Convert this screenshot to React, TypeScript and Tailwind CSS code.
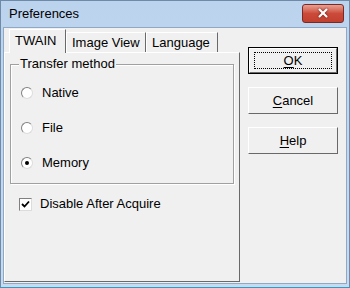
import { X } from 'lucide-react';

const radios = [
  { label: 'Native', checked: false },
  { label: 'File', checked: false },
  { label: 'Memory', checked: true },
];

function Radio({ checked }: { checked: boolean }) {
  return (
    <div className="w-[12px] h-[12px] rounded-full bg-white border border-t-[#808080] border-l-[#808080] border-r-[#dcdcdc] border-b-[#dcdcdc] flex items-center justify-center">
      {checked && <div className="w-[4px] h-[4px] rounded-full bg-black" />}
    </div>
  );
}

function Button({ label, mnemonic, isDefault }: { label: string; mnemonic: string; isDefault?: boolean }) {
  const rest = label.slice(1);
  return (
    <div className={`h-[27px] w-[90px] ${isDefault ? 'border border-black' : ''}`}>
      <div className="h-full w-full bg-[#f0f0f0] border-t border-l border-t-white border-l-white border-r border-b border-r-[#696969] border-b-[#696969] flex items-center justify-center">
        <div className={`flex items-center justify-center ${isDefault ? 'border border-dotted border-black w-[78px] h-[17px]' : ''}`}>
          <span className="text-[13px] text-black leading-none">
            <span className="underline underline-offset-2">{mnemonic}</span>
            {rest}
          </span>
        </div>
      </div>
    </div>
  );
}

export default function App() {
  return (
    <div
      className="w-[350px] h-[288px] flex flex-col bg-gradient-to-b from-[#bcd3ee] to-[#c8daf0] border border-[#6f8aa8] border-b-[#2a9ec4] overflow-hidden"
      style={{ fontFamily: '"Liberation Sans", Arial, sans-serif' }}
    >
      <div className="h-[26px] flex items-center justify-between pl-[8px] pr-[5px] shrink-0">
        <span className="text-[13px] text-black">Preferences</span>
        <div className="w-[42px] h-[19px] mt-[-2px] rounded-[3px] border border-[#7a2a25] bg-gradient-to-b from-[#e8a093] via-[#cc4a3a] to-[#c2402e] flex items-center justify-center">
          <X size={14} strokeWidth={3.5} className="text-white drop-shadow-[0_0_1px_rgba(80,20,20,0.9)]" />
        </div>
      </div>

      <div className="flex-1 mx-[2px] mb-[3px] bg-[#f0f0f0] border border-[#8fa8c4] flex">
        <div className="w-[236px] flex flex-col">
          <div className="h-[24px] flex items-end pl-[5px] shrink-0">
            <div className="h-[24px] w-[57px] bg-[#f0f0f0] border-t border-l border-white border-r border-r-[#696969] relative z-10 mb-[-1px] flex items-center pl-[5px] pb-[2px]">
              <span className="text-[13px] text-black">TWAIN</span>
            </div>
            <div className="h-[20px] w-[80px] border-t border-l border-white border-r border-r-[#696969] flex items-center pl-[5px]">
              <span className="text-[13px] text-black">Image View</span>
            </div>
            <div className="h-[20px] w-[72px] border-t border-l border-white border-r border-r-[#696969] flex items-center pl-[5px]">
              <span className="text-[13px] text-black">Language</span>
            </div>
          </div>

          <div className="flex-1 mb-[1px] border-t border-l border-white border-r border-b border-r-[#696969] border-b-[#696969] px-[5px] pt-[11px]">
            <div className="h-[120px] border border-[#a0a0a0] shadow-[inset_1px_1px_0_#fff,1px_1px_0_#fff] relative pt-[20px] pl-[10px]">
              <span className="absolute left-[8px] top-[-9px] bg-[#f0f0f0] px-[1px] text-[13px] text-black leading-[16px]">
                Transfer method
              </span>
              <div className="flex flex-col gap-[19px]">
                {radios.map((r) => (
                  <div key={r.label} className="h-[16px] flex items-center gap-[9px]">
                    <Radio checked={r.checked} />
                    <span className="text-[13px] text-black">{r.label}</span>
                  </div>
                ))}
              </div>
            </div>

            <div className="mt-[12px] h-[16px] flex items-center gap-[8px] pl-[9px]">
              <div className="w-[13px] h-[13px] bg-white border border-t-[#808080] border-l-[#808080] border-r-[#dcdcdc] border-b-[#dcdcdc] flex items-center justify-center">
                <svg width="9" height="9" viewBox="0 0 9 9">
                  <path d="M1 4 L3.5 6.5 L8 1.5" fill="none" stroke="black" strokeWidth="1.8" />
                </svg>
              </div>
              <span className="text-[13px] text-black">Disable After Acquire</span>
            </div>
          </div>
        </div>

        <div className="ml-[8px] pt-[19px] flex flex-col gap-[13px]">
          <Button label="OK" mnemonic="O" isDefault />
          <Button label="Cancel" mnemonic="C" />
          <Button label="Help" mnemonic="H" />
        </div>
      </div>
    </div>
  );
}
